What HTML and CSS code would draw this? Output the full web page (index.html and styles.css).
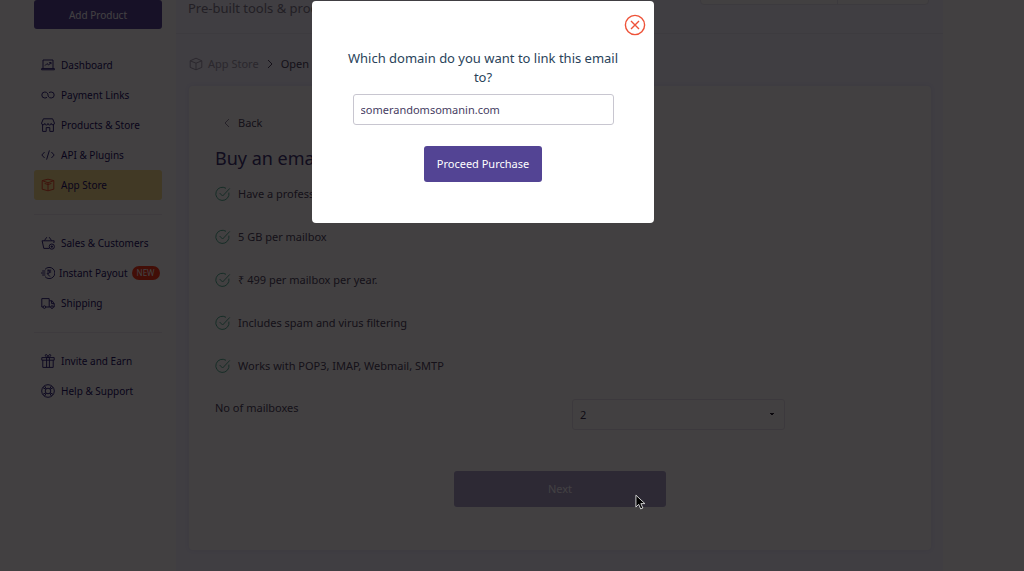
FILE: index.html
```
<!DOCTYPE html>
<html lang="en">
  <head>
    <title>App Store - Email</title>
    <meta charset="utf-8">
    <meta name="viewport" content="width=device-width, initial-scale=1">
    <link rel="stylesheet" href="styles.css">
  </head>
  <body>
    <svg class="sprite" aria-hidden="true">
      <symbol id="box" viewBox="0 0 14 14"><path d="M1.2 2.6 7 1.2l5.8 1.4v8.6L7 12.8l-5.8-1.6zM1.2 2.6 7 4.8l5.8-2.2M7 4.8v8M3.6 5.4 7 6.6l3.4-1.2"/></symbol>
      <symbol id="cube" viewBox="0 0 14 14"><path d="M1.2 3.8 7 1.2l5.8 2.6v6.6L7 12.8l-5.8-2.4zM1.2 3.8 7 6.2l5.8-2.4M7 6.2v6.6"/></symbol>
      <symbol id="tick" viewBox="0 0 16 16"><path d="M13.9 6.6A6.6 6.6 0 1 1 11 2.3M4.6 7l3 3 7.2-7.6"/></symbol>
    </svg>

    <div class="page">
      <aside class="sidebar">
        <button class="btn add" type="button">Add Product</button>
        <nav>
          <ul class="menu">
            <li><a href="#"><svg class="icon" viewBox="0 0 14 14"><path d="M2 10.4V2h10v8.4M.6 11.8h12.8v-1.2H.6zM4 7.6l2-2 1.6 1.4L10 4.6M8.2 4.6H10v1.6"/></svg>Dashboard</a></li>
            <li><a href="#"><svg class="icon" viewBox="0 0 14 14"><path d="M6 9.300C5.400 9.800 4.700 10 3.800 10a3 3 0 0 1 0-6C6.400 4 7 6 7 7M8 4.700c.6-.5 1.300-.7 2.200-.7a3 3 0 0 1 0 6C7.600 10 7 8 7 7"/></svg>Payment Links</a></li>
            <li><a href="#"><svg class="icon" viewBox="0 0 14 14"><path d="M2.400.8h9.200l1.800 4.200a1.600 1.600 0 0 1-3.200.4 1.600 1.600 0 0 1-3.200 0 1.600 1.600 0 0 1-3.200 0A1.600 1.600 0 0 1 .6 5zM1.600 7v6.400h3.600V9.600h3.600v3.800h3.600V7"/></svg>Products &amp; Store</a></li>
            <li><a href="#"><svg class="icon" viewBox="0 0 14 14"><path d="M3.600 4 .8 7l2.800 3M10.400 4l2.800 3-2.800 3M8.400 2.400l-2.800 9.200"/></svg>API &amp; Plugins</a></li>
            <li><a class="active" href="#"><svg class="icon"><use href="#box"/></svg>App Store</a></li>
          </ul>
          <ul class="menu">
            <li><a href="#"><svg class="icon" viewBox="0 0 14 14"><path d="M.8 4.800h12.400L12.800 7M1.200 5l1.600 7.400h5.400M3.400 4.600l2.400-3.400M10.600 4.600 8.200 1.200M10.800 8a2.600 2.600 0 1 1 0 5.200 2.600 2.600 0 0 1 0-5.200zM10.800 9.400v2.400M9.600 10.600h2.400"/></svg>Sales &amp; Customers</a></li>
            <li><a class="payout" href="#"><svg class="icon" viewBox="0 0 14 14"><path d="M4 3.400a5.600 5.600 0 1 1 0 7.200M0 7h4.400M1.200 5h3.200M1.200 9h3.200M6.200 4.200h4M6.200 6h4M7 4.200c2.400 0 2.400 3.400 0 3.400h-.8l2.800 3"/></svg>Instant Payout <span class="badge">NEW</span></a></li>
            <li><a href="#"><svg class="icon" viewBox="0 0 14 14"><path d="M2 11H.8V2.600h7.400V11H4.800M8.200 4.800h3l2 3V11h-.8M9.600 11H8.200M10.600 5v2.600h2.600M3.400 9.800a1.300 1.300 0 1 1 0 2.600 1.300 1.300 0 0 1 0-2.600zM11 9.800a1.300 1.300 0 1 1 0 2.600 1.300 1.300 0 0 1 0-2.600z"/></svg>Shipping</a></li>
          </ul>
          <ul class="menu">
            <li><a href="#"><svg class="icon" viewBox="0 0 14 14"><path d="M.8 3.600h12.400v2.600H.8zM1.800 6.200v7.200h10.400V6.200M5.600 3.600v9.800M8.400 3.600v9.800M7 3.600C4.600 3.600 3.400.6 5 .6S7 2.400 7 3.600zM7 3.600c2.400 0 3.600-3 2-3S7 2.400 7 3.600z"/></svg>Invite and Earn</a></li>
            <li><a href="#"><svg class="icon" viewBox="0 0 14 14"><circle cx="7" cy="7" r="6.300"/><circle cx="7" cy="7" r="2.800"/><path d="m1.800 3.600 3 1.600M3.600 1.800l1.600 3M12.200 3.600l-3 1.600M10.400 1.800l-1.600 3M1.800 10.400l3-1.600M3.600 12.200l1.600-3M12.200 10.400l-3-1.600M10.400 12.200l-1.600-3"/></svg>Help &amp; Support</a></li>
          </ul>
        </nav>
      </aside>

      <main class="content">
        <header class="topbar">
          <p>Pre-built tools &amp; products</p>
          <div class="search">
            <input type="text" aria-label="Search">
            <button type="button" aria-label="Search"></button>
          </div>
        </header>
        <div class="crumbs">
          <svg class="icon"><use href="#cube"/></svg>
          <a href="#">App Store</a>
          <svg class="chevron" viewBox="0 0 6 10"><path d="m1 1 4 4-4 4"/></svg>
          <span>Open</span>
        </div>
        <section class="card">
          <a class="back" href="#"><svg class="chevron" viewBox="0 0 6 10"><path d="M5 1 1 5l4 4"/></svg>Back</a>
          <h1>Buy an email</h1>
          <ul class="features">
            <li><svg class="tick"><use href="#tick"/></svg>Have a professional email</li>
            <li><svg class="tick"><use href="#tick"/></svg>5 GB per mailbox</li>
            <li><svg class="tick"><use href="#tick"/></svg>₹ 499 per mailbox per year.</li>
            <li><svg class="tick"><use href="#tick"/></svg>Includes spam and virus filtering</li>
            <li><svg class="tick"><use href="#tick"/></svg>Works with POP3, IMAP, Webmail, SMTP</li>
          </ul>
          <div class="field">
            <label for="mailboxes">No of mailboxes</label>
            <select id="mailboxes"><option>1</option><option selected>2</option><option>3</option></select>
          </div>
          <button class="btn next" type="button">Next</button>
        </section>
      </main>
    </div>

    <div class="overlay">
      <form class="modal" role="dialog" aria-labelledby="question">
        <button class="close" type="button" aria-label="Close"><svg viewBox="0 0 22 22"><circle cx="11" cy="11" r="9.600"/><path d="m7 7 8 8M15 7l-8 8"/></svg></button>
        <label id="question" for="domain">Which domain do you want to link this email to?</label>
        <input id="domain" type="text" value="somerandomsomanin.com">
        <button class="btn proceed" type="button">Proceed Purchase</button>
      </form>
    </div>
    <svg class="cursor" viewBox="0 0 12 18"><path d="M1 1v13l3-3 2.200 5 2.400-1-2.200-4.800h4.400z"/></svg>
  </body>
</html>
```
FILE: styles.css
```
* {box-sizing: border-box;}
body {margin: 0; font-family: "Noto Sans", Tahoma, Verdana, sans-serif; font-size: 11px; line-height: 16px; color: #4c465c; background-color: #fffffa; overflow: hidden;}
a {color: inherit; text-decoration: none;}
ul {list-style: none; margin: 0; padding: 0;}
button, input, select {font: inherit;}
svg {fill: none; stroke: currentColor; flex: none;}
.sprite {position: absolute; width: 0; height: 0;}
.icon {width: 14px; height: 14px;}
.chevron {width: 6px; height: 10px;}
.btn {border: 0; border-radius: 3px; background-color: #534494; color: #fff;}

.page {display: grid; grid-template-columns: 176px 1fr 81px; min-height: 100vh;}

/* sidebar */
.sidebar {padding: 0 14px 0 34px; font-size: 10px;}
.add {display: block; width: 100%; height: 29px;}
nav {padding-top: 21px;}
.menu {color: #1b1264;}
.menu .icon {color: #30287c;}
.menu + .menu {border-top: 1px solid #eeeaee; margin-top: 14px; padding-top: 13px;}
.menu a {display: flex; align-items: center; gap: 6px; height: 30px; padding-left: 7px; border-radius: 3px; white-space: nowrap;}
.menu .active {background-color: #fbe28a;}
.menu .active .icon {color: #f0502c;}
.menu .payout {gap: 4px;}
.badge {padding: 0 5px; border-radius: 8px; background-color: #ff3a14; color: #fff; font-size: 8px; line-height: 14px;}

/* content */
.content {background-color: #f5f5ff; padding: 0 12px 21px 13px;}
.topbar {display: flex; justify-content: space-between; height: 34px; margin: 0 -12px 0 -13px; padding: 0 14px 0 12px; border-bottom: 1px solid #eaeaf4; color: #827e8a; font-size: 13px;}
.topbar p {margin: 0;}
.search {display: flex; width: 229px; height: 36px; margin-top: -31px; border: 1px solid #e6e6ee; border-radius: 4px; background-color: #fffffa;}
.search input {flex: 1; min-width: 0; border: 0; background: none;}
.search button {width: 91px; border: 0; border-left: 1px solid #e6e6ee; background: none;}
.crumbs {display: flex; align-items: center; gap: 5px; height: 52px; padding-top: 8px;}
.crumbs .icon, .crumbs a {color: #a39eac;}
.crumbs .chevron {margin: 0 3px;}
.card {padding: 29px 26px 43px; background-color: #fffffa; border-radius: 4px; box-shadow: 0 0 4px #e2e2f4;}
.back {display: flex; align-items: center; gap: 8px; padding-left: 9px;}
.back .chevron {color: #8a8598;}
h1 {margin: 13px 0 14px; font-size: 18px; font-weight: normal; line-height: 28px; color: #3c3470;}
.features li {display: flex; align-items: center; gap: 7px; height: 16px; margin-bottom: 27px;}
.features li:last-child {margin-bottom: 25px;}
.tick {width: 16px; height: 16px; color: #50b090;}
.field {display: grid; grid-template-columns: 357px 213px;}
.field label {padding-top: 1px;}
select {height: 31px; padding: 0 7px; border: 1px solid #e6e2ea; border-radius: 3px; appearance: none; color: #38334c; background: linear-gradient(to bottom left, #201c28 50%, transparent 50%) no-repeat right 12px center / 3px 3px, linear-gradient(to bottom right, #201c28 50%, transparent 50%) no-repeat right 9px center / 3px 3px;}
.next {display: block; width: 212px; height: 36px; margin: 41px auto 0; background-color: #aaa2c8;}

/* modal */
.overlay {position: fixed; inset: 0; display: flex; justify-content: center; align-items: flex-start; padding: 1px 58px 0 0; background-color: rgba(3, 0, 3, 0.75);}
.modal {position: relative; display: flex; flex-direction: column; align-items: center; width: 342px; padding: 48px 30px 41px; border-radius: 4px; background-color: #fff;}
.modal label {font-size: 13px; line-height: 19px; text-align: center; color: #29435a;}
.modal input {width: 261px; height: 31px; margin-top: 7px; padding: 0 7px; border: 1px solid #c8c6d0; border-radius: 3px; color: #463c62;}
.proceed {height: 36px; margin-top: 21px; padding: 0 13px;}
.close {position: absolute; top: 13px; right: 8px; width: 22px; height: 22px; padding: 0; border: 0; background: none; color: #ee5238;}
.close svg {display: block; stroke-width: 1.4;}
.cursor {position: fixed; left: 635px; top: 494px; width: 11px; height: 17px; fill: #000; stroke: #ddd;}
```
